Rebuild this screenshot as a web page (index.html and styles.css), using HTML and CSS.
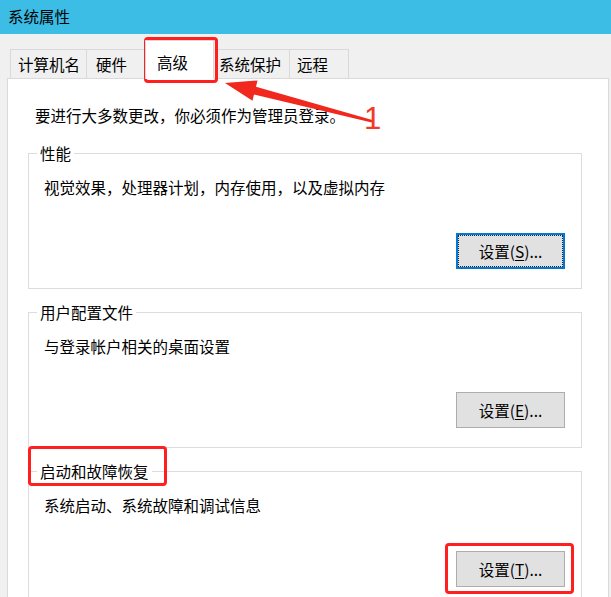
FILE: index.html
```html
<!DOCTYPE html>
<html lang="zh-CN">
<head>
<meta charset="utf-8">
<title>系统属性</title>
<link rel="stylesheet" href="styles.css">
</head>
<body>
<div class="screen">
  <div class="titlebar">系统属性</div>
  <div class="tabs">
    <div class="tab tab-computer">计算机名</div>
    <div class="tab tab-hardware">硬件</div>
    <div class="tab tab-advanced is-selected">高级</div>
    <div class="tab tab-protect">系统保护</div>
    <div class="tab tab-remote">远程</div>
  </div>
  <div class="panel">
    <p class="intro">要进行大多数更改，你必须作为管理员登录。</p>

    <div class="group">
      <div class="legend">性能</div>
      <p class="desc">视觉效果，处理器计划，内存使用，以及虚拟内存</p>
      <div class="btn-row"><button class="btn is-focused">设置(<u>S</u>)...</button></div>
    </div>

    <div class="group">
      <div class="legend">用户配置文件</div>
      <p class="desc">与登录帐户相关的桌面设置</p>
      <div class="btn-row"><button class="btn">设置(<u>E</u>)...</button></div>
    </div>

    <div class="group">
      <div class="legend">启动和故障恢复</div>
      <p class="desc">系统启动、系统故障和调试信息</p>
      <div class="btn-row"><button class="btn">设置(<u>T</u>)...</button></div>
    </div>
  </div>

  <div class="mark mark-tab"></div>
  <div class="mark mark-legend"></div>
  <div class="mark mark-button"></div>
  <svg class="arrow" width="611" height="597" viewBox="0 0 611 597">
    <polygon fill="#f0281e" points="225,83 257.5,80.5 256,86.7 372.3,120 371.7,122.5 254,94.5 252.5,100.8"/>
  </svg>
  <div class="callout">1</div>
</div>
</body>
</html>
```

FILE: styles.css
```css
* { box-sizing: border-box; }

html, body {
  margin: 0;
  padding: 0;
}

body {
  background: #f0f0f0;
  font-family: "Noto Sans CJK SC", "Noto Sans", sans-serif;
  font-size: 15.5px;
  color: #000;
  width: 611px;
  height: 597px;
  overflow: hidden;
}

.screen {
  position: relative;
  width: 611px;
  height: 597px;
  overflow: hidden;
}

.titlebar {
  height: 34px;
  background: #3bbde5;
  line-height: 32px;
  padding-left: 8px;
}

.tabs {
  display: flex;
  align-items: flex-end;
  margin-top: 6px;
  padding-left: 10px;
  height: 38px;
}

.tab {
  height: 29px;
  line-height: 28px;
  border: 1px solid #d9d9d9;
  border-bottom: none;
  background: #f0f0f0;
  white-space: nowrap;
}

.tab + .tab { border-left: none; }

.tab-computer { width: 77px; padding-left: 7px; }
.tab-hardware { width: 60px; padding-left: 9px; }
.tab-advanced { width: 65px; padding-left: 9px; }
.tab-protect  { width: 78px; padding-left: 5px; }
.tab-remote   { width: 59px; padding-left: 7px; }

.tab.is-selected {
  position: relative;
  z-index: 1;
  height: 39px;
  width: 69px;
  margin: 0 -2px -1px -2px;
  padding-left: 11px;
  padding-top: 11px;
  line-height: 20px;
  background: #fff;
  border: 1px solid #d9d9d9;
  border-bottom: none;
}

.tab-protect { padding-left: 7px; }

.panel {
  margin: 0 2px 0 7px;
  background: #fff;
  border: 1px solid #d9d9d9;
  padding: 26px 26px 40px 20px;
}

.intro {
  margin: 0 0 0 7px;
  line-height: 20px;
}

.group {
  border: 1px solid #dcdcdc;
  padding: 0 16px 19px 15px;
  margin-top: 23px;
}

.intro + .group { margin-top: 28px; }

.legend {
  width: fit-content;
  margin: -11px 0 0 -7px;
  padding: 0 3px;
  background: #fff;
  line-height: 20px;
}

.desc {
  margin: 14px 0 0 0;
  line-height: 20px;
}

.btn-row {
  display: flex;
  justify-content: flex-end;
  margin-top: 36px;
}

.btn {
  width: 109px;
  height: 36px;
  padding: 0;
  font: inherit;
  color: #000;
  background: #e1e1e1;
  border: 1px solid #adadad;
  line-height: 20px;
}

.btn u {
  text-decoration-thickness: 1px;
  text-underline-offset: 2px;
}

.btn.is-focused {
  border: 2px solid #0078d7;
  outline: 1px dotted #222;
  outline-offset: -3px;
}

.mark {
  position: absolute;
  border: 3px solid #ff1f1f;
  border-radius: 4px;
}

.mark-tab    { left: 144px; top: 37px;  width: 74px;  height: 46px; }
.mark-legend { left: 28px;  top: 446px; width: 139px; height: 40px; }
.mark-button { left: 445px; top: 543px; width: 129px; height: 51px; }

.arrow {
  position: absolute;
  left: 0;
  top: 0;
}

.callout {
  position: absolute;
  left: 364px;
  top: 101px;
  font-family: "Liberation Sans", sans-serif;
  font-size: 31px;
  line-height: 36px;
  color: #f03a2a;
}
```
